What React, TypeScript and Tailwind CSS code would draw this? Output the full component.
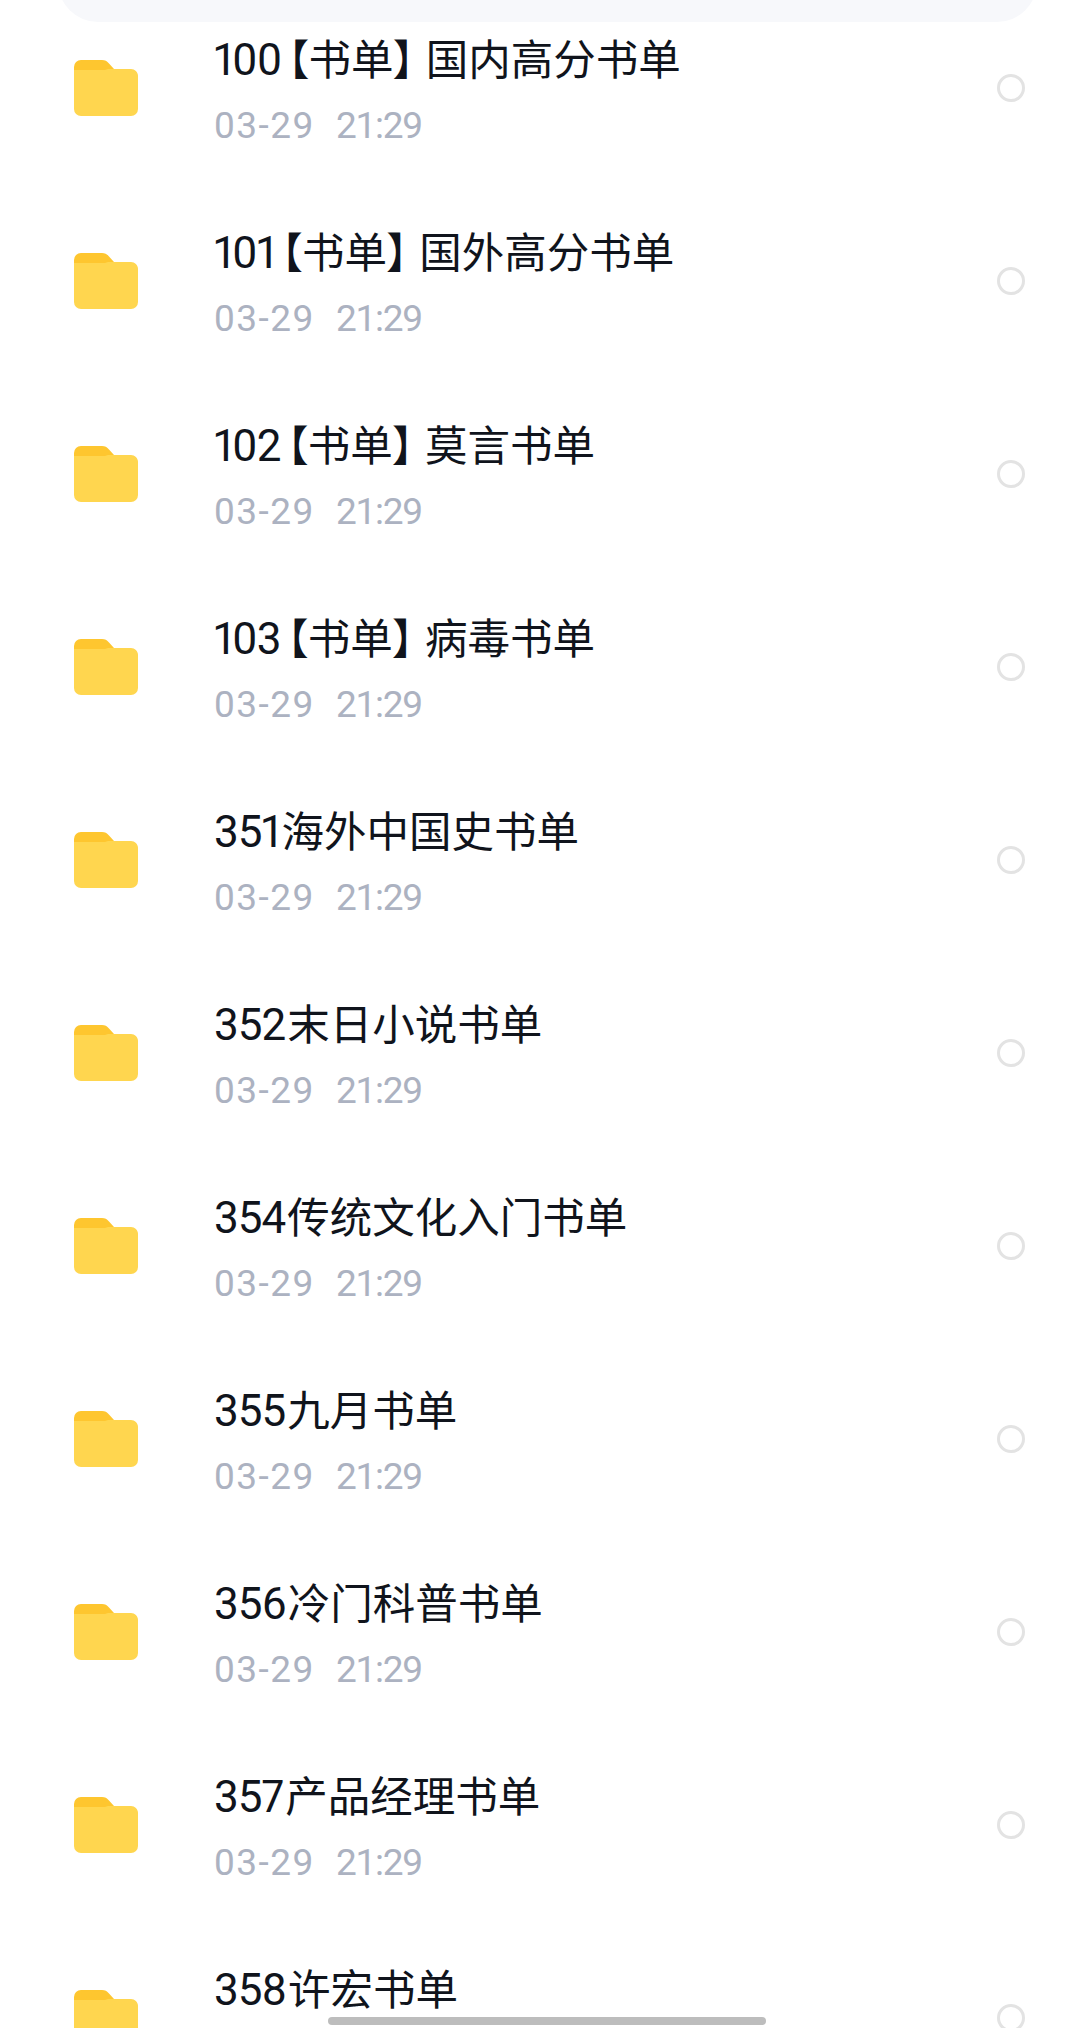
const rows = [
  { num: "100", tag: "书单", name: "国内高分书单" },
  { num: "101", tag: "书单", name: "国外高分书单" },
  { num: "102", tag: "书单", name: "莫言书单" },
  { num: "103", tag: "书单", name: "病毒书单" },
  { num: "351", name: "海外中国史书单" },
  { num: "352", name: "末日小说书单" },
  { num: "354", name: "传统文化入门书单" },
  { num: "355", name: "九月书单" },
  { num: "356", name: "冷门科普书单" },
  { num: "357", name: "产品经理书单" },
  { num: "358", name: "许宏书单" },
];

function FolderIcon() {
  return (
    <svg width="64" height="56" viewBox="0 0 64 56" className="ml-px shrink-0">
      <path d="M0 7a7 7 0 0 1 7-7h21c3 0 5 1 7 3.500l5 5.500v10H0z" fill="#fec62f" />
      <path d="M0 10h57a7 7 0 0 1 7 7v32a7 7 0 0 1-7 7H7a7 7 0 0 1-7-7z" fill="#ffd64f" />
      <path d="M34 9h23a7 7 0 0 1 7 7v6H0V11h28z" fill="#ffd64f" />
    </svg>
  );
}

function Row({ num, tag, name }: { num: string; tag?: string; name: string }) {
  return (
    <div className="flex h-[193px] items-center pl-[73px] pr-[55px]">
      <FolderIcon />
      <div className="ml-[76px] flex flex-1 flex-col pt-[4px]">
        <p className="text-[42.5px] leading-[56px] text-[#10141c] [font-feature-settings:'palt']">
          <span className="font-['Roboto'] text-[44px] tracking-[-1px] proportional-nums">{num}</span>
          {tag && (
            <>
              <span className="ml-[6px]">【</span>
              {tag}
              <span className="mr-[9px]">】</span>
            </>
          )}
          <span className="ml-[2px]">{name}</span>
        </p>
        <p className="mt-[14px] flex gap-[21px] font-['Roboto'] text-[37px] leading-[48px] text-[#acb2c1]">
          <span className="tracking-[1.5px]">03-29</span>
          <span className="tracking-[-1.25px]">21:29</span>
        </p>
      </div>
      <div className="h-[28px] w-[28px] rounded-full border-[3px] border-[#e3e3e3]" />
    </div>
  );
}

export default function App() {
  return (
    <div
      className="relative h-[2028px] w-[1080px] overflow-hidden bg-white"
      style={{ fontFamily: '"Noto Sans CJK SC", "Noto Sans", sans-serif' }}
    >
      <div className="-mt-[38px] ml-[58px] mr-[43px] h-[60px] rounded-b-[40px] bg-[#f7f8fb]" />
      <div className="-mt-[31px]">
        {rows.map((row) => (
          <Row key={row.num} {...row} />
        ))}
      </div>
      <div className="absolute bottom-[3px] left-[328px] h-[8px] w-[438px] rounded-full bg-[#bdbdbd]" />
    </div>
  );
}
